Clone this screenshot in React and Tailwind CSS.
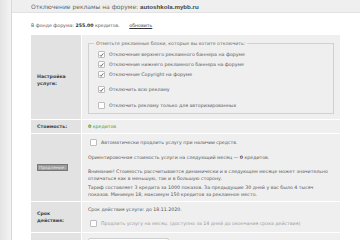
import React from "react";

function Box({ checked }) {
  return (
    <span className="inline-flex items-center justify-center w-[7px] h-[7px] bg-white border border-[#bdbdbd] rounded-[1px] shrink-0">
      {checked && (
        <svg viewBox="0 0 10 10" className="w-[6px] h-[6px]">
          <path d="M1.5 5.2 L4 7.8 L8.6 1.8" fill="none" stroke="#444" strokeWidth="1.6" />
        </svg>
      )}
    </span>
  );
}

function CheckRow({ checked, children, className = "" }) {
  return (
    <div className={"flex items-center gap-[4px] h-[7px] shrink-0 " + className}>
      <Box checked={checked} />
      <span className="whitespace-nowrap">{children}</span>
    </div>
  );
}

export default function App() {
  return (
    <div className="w-[360px] h-[240px] overflow-hidden flex bg-white text-[#555] font-['DejaVu_Sans',sans-serif] text-[4.7px] leading-[7px]">
      <div className="w-[12px] shrink-0 bg-gradient-to-r from-[#e4e4e4] to-[#f4f4f4] border-r border-[#d8d8d8]" />
      <div className="flex-1 flex flex-col">
        <div className="h-[13px] shrink-0 bg-[#efefef] border-b border-[#e2e2e2] pl-[19px] flex items-center text-[6px] text-[#666]">
          <span>
            Отключение рекламы на форуме: <b className="text-[#444] font-['Liberation_Sans',sans-serif] text-[6.2px]">autoshkola.mybb.ru</b>
          </span>
        </div>
        <div className="pl-[19px] mt-[9px] h-[7px] shrink-0">
          В фонде форума: <b className="text-[#333]">255.00</b> кредитов. <span className="underline ml-[8px] text-[#333]">обновить</span>
        </div>
        <div className="ml-[19px] w-[309px] mt-[6px] flex flex-col gap-[1px] shrink-0">
          <div className="flex gap-[1px] h-[84px] shrink-0">
            <div className="w-[50px] bg-[#e2e2e2] flex items-center pl-[6px] font-bold text-[#444] pt-[6px]">Настройка<br />услуги:</div>
            <div className="flex-1 bg-[#efefef] px-[6px] pt-[5px]">
              <fieldset className="border border-[#d0d0d0] pl-[9px] pb-[5px] h-[74px]">
                <legend className="px-[2px] ml-[-4px] text-[#666]">Отметьте рекламные блоки, которые вы хотите отключить:</legend>
                <div className="flex flex-col gap-[3px] mt-[4px]">
                  <CheckRow checked>Отключение верхнего рекламного баннера на форуме</CheckRow>
                  <CheckRow checked>Отключение нижнего рекламного баннера на форуме</CheckRow>
                  <CheckRow checked>Отключение Copyright на форуме</CheckRow>
                  <CheckRow checked className="mt-[5px]">Отключить всю рекламу</CheckRow>
                  <CheckRow className="mt-[6px]">Отключить рекламу только для авторизированных</CheckRow>
                </div>
              </fieldset>
            </div>
          </div>
          <div className="flex gap-[1px] h-[13px] shrink-0">
            <div className="w-[50px] bg-[#e2e2e2] flex items-center pl-[6px] font-bold text-[#444]">Стоимость:</div>
            <div className="flex-1 bg-[#efefef] flex items-center pl-[6px] text-[#3c9a2c]">
              <b>0</b>&nbsp;кредитов
            </div>
          </div>
          <div className="flex gap-[1px] h-[67px] shrink-0">
            <div className="w-[50px] bg-[#e2e2e2] flex items-center pl-[6px]">
              <span className="bg-[#9a9a9a] text-[#eee] border border-[#777] px-[1px] leading-[5px] text-[4.3px]">Продление:</span>
            </div>
            <div className="flex-1 bg-[#efefef] pl-[6px] pr-[8px] pt-[5px] flex flex-col">
              <CheckRow className="ml-[2px]">Автоматически продлить услугу при наличии средств.</CheckRow>
              <div className="mt-[8px]">Ориентировочная стоимость услуги на следующий месяц — <b>0</b> кредитов.</div>
              <div className="mt-[7px]">Внимание! Стоимость рассчитывается динамически и в следующем месяце может значительно отличаться как в меньшую, так и в большую сторону.</div>
              <div className="mt-[2px]">Тариф составляет 3 кредита за 1000 показов. За предыдущие 30 дней у вас было 4 тысяч показов. Минимум 18, максимум 150 кредитов за рекламное место.</div>
            </div>
          </div>
          <div className="flex gap-[1px] h-[30px] shrink-0">
            <div className="w-[50px] bg-[#e2e2e2] flex items-center pl-[6px] font-bold text-[#444]">Срок<br />действия:</div>
            <div className="flex-1 bg-[#efefef] pl-[6px] pt-[4px] flex flex-col">
              <div>Срок действия услуги: до 18.11.2020.</div>
              <CheckRow className="ml-[2px] mt-[7px] text-[#999]">Продлить услугу на месяц. (доступно за 14 дней до окончания срока действия)</CheckRow>
            </div>
          </div>
          <div className="flex gap-[1px] h-[20px] shrink-0">
            <div className="w-[50px] bg-[#e2e2e2]" />
            <div className="flex-1 bg-[#efefef] pl-[6px] pt-[5px]">
              <div className="w-[81px] h-[12px] bg-white border border-[#cfcfcf] rounded-[2px]" />
            </div>
          </div>
        </div>
      </div>
    </div>
  );
}
